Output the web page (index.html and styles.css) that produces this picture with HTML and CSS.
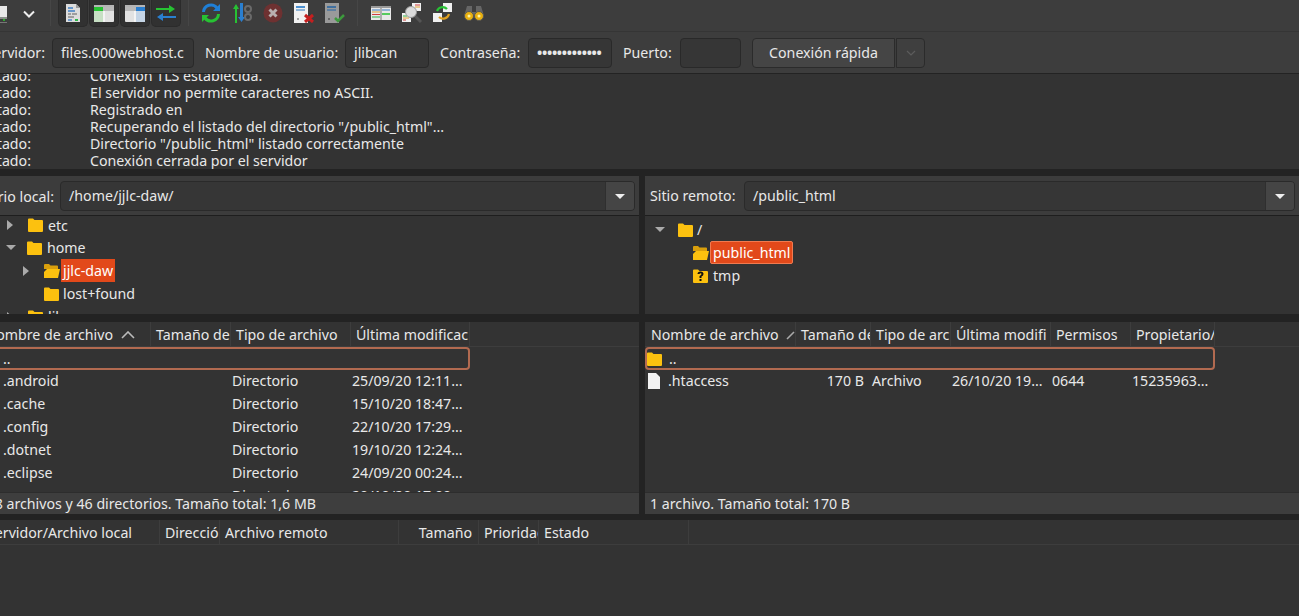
FILE: index.html
```html
<!DOCTYPE html>
<html lang="es">
<head>
  <meta charset="UTF-8">
  <title>FileZilla</title>
  <link rel="stylesheet" href="styles.css">
</head>
<body>
  <div class="toolbar">
    <div class="tool-lead">
      <svg width="8" height="20" viewBox="0 0 8 20"><rect x="0" y="2" width="7" height="11" fill="#e8e8e8"/><rect x="0" y="13" width="7" height="2" fill="#8a8f8a"/><rect x="3" y="15" width="2" height="2" fill="#2fa82f"/><rect x="0" y="18" width="7" height="1" fill="#777"/></svg>
      <svg class="chevron" width="12" height="8" viewBox="0 0 12 8"><path d="M1 1.500l5 5 5-5" fill="none" stroke="#eee" stroke-width="2"/></svg>
    </div>
    <div class="tool-sep"></div>
    <div class="tool-pressed-group">
      <button class="tool pressed"><svg width="16" height="20" viewBox="0 0 16 20"><path d="M1 1h10l4 4v14H1z" fill="#dcdcdc"/><path d="M11 1l4 4h-4z" fill="#9a9a9a"/><path d="M3 5h5M3 8h7" stroke="#3f7fc4" stroke-width="1.400"/><path d="M3 11h3M7 11h5M3 14h6" stroke="#888" stroke-width="1.400"/><path d="M10 17h3" stroke="#2fb84a" stroke-width="2"/><path d="M3 17h4" stroke="#3f7fc4" stroke-width="1.400"/></svg></button>
      <button class="tool pressed"><svg width="20" height="17" viewBox="0 0 20 17"><rect y="0" width="20" height="17" rx="1" fill="#e2e2e2"/><rect width="20" height="2" fill="#b5b5b5"/><rect y="2" width="9" height="4" fill="#27c233"/><rect x="9" y="2" width="11" height="4" fill="#b9b9b9"/><rect y="6" width="9" height="11" fill="#c7e0c4"/><rect x="9" y="6" width="2" height="11" fill="#f4f4f4"/></svg></button>
      <button class="tool pressed"><svg width="20" height="17" viewBox="0 0 20 17"><rect y="0" width="20" height="17" rx="1" fill="#e2e2e2"/><rect width="20" height="2" fill="#b5b5b5"/><rect x="11" y="2" width="9" height="4" fill="#2a7fd0"/><rect y="2" width="11" height="4" fill="#b9b9b9"/><rect x="11" y="6" width="9" height="11" fill="#c5d5e6"/><rect x="9" y="6" width="2" height="11" fill="#f4f4f4"/></svg></button>
      <button class="tool pressed"><svg width="20" height="18" viewBox="0 0 20 18"><path d="M0 4h13V1l6 4-6 4V6H0z" fill="#27c233"/><path d="M20 12H7V9l-6 4 6 4v-3h13z" fill="#2a7fd0"/></svg></button>
    </div>
    <div class="tool-sep tool-sep-mid"></div>
    <div class="tool-group">
      <button class="tool"><svg width="20" height="20" viewBox="0 0 20 20"><path d="M2.500 9A7.500 7.500 0 0 1 16 5" fill="none" stroke="#1f7fd6" stroke-width="3"/><path d="M19 1v7h-7z" fill="#1f7fd6"/><path d="M17.500 11A7.500 7.500 0 0 1 4 15" fill="none" stroke="#27c233" stroke-width="3"/><path d="M1 19v-7h7z" fill="#27c233"/></svg></button>
      <button class="tool"><svg width="20" height="20" viewBox="0 0 20 20"><path d="M3 20V6H1l3-5 3 5H5v14z" fill="#27c233"/><path d="M8 0v14H6l3.500 5 3.500-5h-2V0z" fill="#2a7fd0"/><circle cx="16" cy="6" r="3" fill="none" stroke="#6a6a6a" stroke-width="2"/><circle cx="16" cy="14" r="3" fill="none" stroke="#6a6a6a" stroke-width="2"/></svg></button>
      <button class="tool"><svg width="20" height="20" viewBox="0 0 20 20"><circle cx="10" cy="10" r="9.500" fill="#6e3131"/><path d="M6.500 6.500l7 7M13.500 6.500l-7 7" stroke="#b9b0b0" stroke-width="3"/></svg></button>
      <button class="tool"><svg width="20" height="20" viewBox="0 0 20 20"><rect x="0" y="0" width="14" height="20" fill="#f1f1f1"/><rect x="2" y="3" width="9" height="2" fill="#4a8fd0"/><rect x="2" y="6" width="9" height="2" fill="#8fb5d8"/><circle cx="4" cy="16" r="1" fill="#888"/><path d="M11 12l8 7M19 12l-8 7" stroke="#c41f1f" stroke-width="3"/></svg></button>
      <button class="tool"><svg width="20" height="20" viewBox="0 0 20 20"><rect x="0" y="0" width="14" height="20" fill="#9a9a9a"/><rect x="2" y="3" width="9" height="2" fill="#3f6f9f"/><rect x="2" y="6" width="9" height="2" fill="#5f7f9f"/><circle cx="4" cy="16" r="1" fill="#555"/><path d="M10 15l3 3 6-6" fill="none" stroke="#3d9a3d" stroke-width="2.500"/></svg></button>
    </div>
    <div class="tool-sep tool-sep-end"></div>
    <div class="tool-group">
      <button class="tool"><svg width="20" height="14" viewBox="0 0 20 14"><rect width="20" height="14" fill="#e8e8e8"/><rect width="20" height="2" fill="#9a9a9a"/><path d="M1 4h8" stroke="#3f7fc4"/><path d="M1 6h8" stroke="#e0a030"/><path d="M1 8.500h8" stroke="#d04040"/><path d="M1 11h8" stroke="#30b040"/><path d="M11 4h8" stroke="#3f7fc4"/><path d="M11 8h8" stroke="#27c233" stroke-width="1.500"/><path d="M10 2v12" stroke="#777"/></svg></button>
      <button class="tool"><svg width="22" height="22" viewBox="0 0 22 22"><rect x="11" y="1" width="9" height="8" fill="#f1f1f1"/><path d="M14 3h5" stroke="#d04040"/><path d="M14 5h5" stroke="#e0a030"/><rect x="1" y="11" width="9" height="9" fill="#f1f1f1"/><path d="M2 14h4" stroke="#30b040"/><path d="M2 16h6" stroke="#e0a030"/><path d="M2 18h3" stroke="#d04040"/><path d="M14 14l6 6" stroke="#555" stroke-width="3"/><circle cx="10" cy="10" r="5.500" fill="#dcdcdc" stroke="#999"/></svg></button>
      <button class="tool"><svg width="20" height="20" viewBox="0 0 20 20"><rect x="10" y="0" width="9" height="9" fill="#f1f1f1"/><rect x="0" y="10" width="9" height="9" fill="#f1f1f1"/><path d="M4 8a6 6 0 0 1 10-2" fill="none" stroke="#27c233" stroke-width="2.200"/><path d="M16 11a6 6 0 0 1-10 3" fill="none" stroke="#e0a020" stroke-width="2.200"/></svg></button>
      <button class="tool"><svg width="20" height="16" viewBox="0 0 20 16"><path d="M3 1h5v6h4V1h5l3 10H0z" fill="#666"/><circle cx="5" cy="11" r="4.500" fill="#e8b010" stroke="#555"/><circle cx="15" cy="11" r="4.500" fill="#e8b010" stroke="#555"/><circle cx="5" cy="11" r="1.500" fill="#fff2a0"/><circle cx="15" cy="11" r="1.500" fill="#fff2a0"/></svg></button>
    </div>
  </div>

  <div class="quickbar">
    <span class="cut-left cut-server">Servidor:</span>
    <span class="field field-host">files.000webhost.c</span>
    <span class="qlabel qlabel-user">Nombre de usuario:</span>
    <span class="field field-user">jlibcan</span>
    <span class="qlabel qlabel-pass">Contraseña:</span>
    <span class="field field-pass">•••••••••••••</span>
    <span class="qlabel qlabel-port">Puerto:</span>
    <span class="field field-port"></span>
    <button class="quick-btn">Conexión rápida</button>
    <button class="quick-drop"><svg width="10" height="6" viewBox="0 0 10 6"><path d="M1 1l4 4 4-4" fill="none" stroke="#5c5c5c" stroke-width="1.200"/></svg></button>
  </div>

  <div class="log">
    <div class="log-row"><span class="cut-left log-label">Estado:</span><span>Conexión TLS establecida.</span></div>
    <div class="log-row"><span class="cut-left log-label">Estado:</span><span>El servidor no permite caracteres no ASCII.</span></div>
    <div class="log-row"><span class="cut-left log-label">Estado:</span><span>Registrado en</span></div>
    <div class="log-row"><span class="cut-left log-label">Estado:</span><span>Recuperando el listado del directorio "/public_html"...</span></div>
    <div class="log-row"><span class="cut-left log-label">Estado:</span><span>Directorio "/public_html" listado correctamente</span></div>
    <div class="log-row"><span class="cut-left log-label">Estado:</span><span>Conexión cerrada por el servidor</span></div>
  </div>

  <div class="panes">
    <div class="pane">
      <div class="pathbar">
        <span class="cut-left cut-local">Directorio local:</span>
        <div class="combo combo-local"><span class="combo-text">/home/jjlc-daw/</span><span class="combo-arrow"></span></div>
      </div>
      <div class="tree tree-local">
        <div class="tree-row indent-0"><span class="arrow-right"></span><svg class="folder"><use href="#folder"/></svg><span class="tree-name">etc</span></div>
        <div class="tree-row indent-0"><span class="arrow-down"></span><svg class="folder"><use href="#folder"/></svg><span class="tree-name">home</span></div>
        <div class="tree-row indent-1"><span class="arrow-right"></span><svg class="folder-open"><use href="#folder-open"/></svg><span class="tree-name selected">jjlc-daw</span></div>
        <div class="tree-row indent-1"><span class="arrow-none"></span><svg class="folder"><use href="#folder"/></svg><span class="tree-name tree-name-lost">lost+found</span></div>
        <div class="tree-row indent-0"><span class="arrow-right"></span><svg class="folder"><use href="#folder"/></svg><span class="tree-name">lib</span></div>
      </div>
      <div class="hsplit"></div>
      <div class="list list-local">
        <div class="list-head">
          <span class="cut-left col-name-head">Nombre de archivo<svg class="sort" width="14" height="8" viewBox="0 0 14 8"><path d="M1 7l6-6 6 6" fill="none" stroke="#bbb" stroke-width="1.600"/></svg></span>
          <span class="head-cell col-size">Tamaño de</span>
          <span class="head-cell col-type">Tipo de archivo</span>
          <span class="head-cell col-date">Última modificac</span>
        </div>
        <div class="list-row focus"><span class="dots">..</span></div>
        <div class="list-row"><span class="row-name">.android</span><span class="row-type">Directorio</span><span class="row-date">25/09/20 12:11...</span></div>
        <div class="list-row"><span class="row-name">.cache</span><span class="row-type">Directorio</span><span class="row-date">15/10/20 18:47...</span></div>
        <div class="list-row"><span class="row-name">.config</span><span class="row-type">Directorio</span><span class="row-date">22/10/20 17:29...</span></div>
        <div class="list-row"><span class="row-name">.dotnet</span><span class="row-type">Directorio</span><span class="row-date">19/10/20 12:24...</span></div>
        <div class="list-row"><span class="row-name">.eclipse</span><span class="row-type">Directorio</span><span class="row-date">24/09/20 00:24...</span></div>
        <div class="list-row"><span class="row-name"></span><span class="row-type">Directorio</span><span class="row-date">20/10/20 17:00...</span></div>
      </div>
      <div class="status"><span class="cut-left cut-status">8 archivos y 46 directorios. Tamaño total: 1,6 MB</span></div>
    </div>

    <div class="vsplit"></div>

    <div class="pane">
      <div class="pathbar pathbar-remote">
        <span class="path-label">Sitio remoto:</span>
        <div class="combo combo-remote"><span class="combo-text">/public_html</span><span class="combo-arrow"></span></div>
      </div>
      <div class="tree tree-remote">
        <div class="tree-row remote-0"><span class="arrow-down"></span><svg class="folder"><use href="#folder"/></svg><span class="tree-name">/</span></div>
        <div class="tree-row remote-1"><svg class="folder-open"><use href="#folder-open"/></svg><span class="tree-name selected selected-focus">public_html</span></div>
        <div class="tree-row remote-1"><svg class="folder"><use href="#folder-unknown"/></svg><span class="tree-name tree-name-tmp">tmp</span></div>
      </div>
      <div class="hsplit"></div>
      <div class="list list-remote">
        <div class="list-head">
          <span class="head-cell rcol-name">Nombre de archivo<svg class="sort-r" width="10" height="10" viewBox="0 0 10 10"><path d="M1 9l7-7" stroke="#aaa" stroke-width="1.600"/></svg></span>
          <span class="head-cell rcol-size">Tamaño de</span>
          <span class="head-cell rcol-type">Tipo de arc</span>
          <span class="head-cell rcol-date">Última modifi</span>
          <span class="head-cell rcol-perm">Permisos</span>
          <span class="head-cell rcol-owner">Propietario/</span>
        </div>
        <div class="list-row focus focus-remote"><svg class="folder"><use href="#folder"/></svg><span class="dots-remote">..</span></div>
        <div class="list-row"><svg class="file" width="14" height="16" viewBox="0 0 14 16"><path d="M1 0h8l4 4v12H1z" fill="#f2f2f2"/></svg><span class="rrow-name">.htaccess</span><span class="rrow-size">170 B</span><span class="rrow-type">Archivo</span><span class="rrow-date">26/10/20 19...</span><span class="rrow-perm">0644</span><span class="rrow-owner">15235963...</span></div>
      </div>
      <div class="status status-remote"><span>1 archivo. Tamaño total: 170 B</span></div>
    </div>
  </div>

  <div class="queue">
    <div class="queue-head">
      <span class="cut-left qcol-server">Servidor/Archivo local</span>
      <span class="head-cell qcol-dir">Dirección</span>
      <span class="head-cell qcol-remote">Archivo remoto</span>
      <span class="head-cell qcol-size">Tamaño</span>
      <span class="head-cell qcol-prio">Prioridad</span>
      <span class="head-cell qcol-state">Estado</span>
    </div>
  </div>

  <svg class="defs" width="0" height="0">
    <symbol id="folder" viewBox="0 0 15 14"><path d="M0 1.500Q0 .5 1 .5h4l1.500 1.500H14q1 0 1 1V13q0 1-1 1H1q-1 0-1-1z" fill="#fcc10f"/></symbol>
    <symbol id="folder-open" viewBox="0 0 16 14"><path d="M0 1Q0 0 1 0h4l1.500 1.500H13q1 0 1 1V5H0z" fill="#d99f0c"/><path d="M3 5h13l-2 9H0v-6z" fill="#fcc10f"/></symbol>
    <symbol id="folder-unknown" viewBox="0 0 15 14"><path d="M0 1.500Q0 .5 1 .5h4l1.500 1.500H14q1 0 1 1V13q0 1-1 1H1q-1 0-1-1z" fill="#fcc10f"/><path d="M4.500 5q0-2.500 3-2.500t3 2.500q0 1.500-2 2.500v1.500h-2V7q2-.8 2-2 0-.8-1-.8t-1 .8zM6.500 10h2v2h-2z" fill="#111"/></symbol>
  </svg>
</body>
</html>
```

FILE: styles.css
```css
* {
  box-sizing: border-box;
}
html, body {
  margin: 0;
  height: 616px;
  overflow: hidden;
}
body {
  background-color: #333;
  color: #e8e8e8;
  font-family: "Noto Sans", sans-serif;
  font-size: 14.2px;
  line-height: 17px;
  white-space: nowrap;
}
button {
  font: inherit;
  color: inherit;
  padding: 0;
}

/* text that runs off the left edge of the window */
.cut-left {
  display: flex;
  justify-content: flex-end;
  align-items: center;
  flex: none;
}

/* toolbar */
.toolbar {
  display: flex;
  height: 32px;
  padding-bottom: 5px;
  background-color: #3d3d3d;
  border-bottom: 1px solid #353535;
}
.tool-lead {
  display: flex;
  align-items: center;
  width: 50px;
  padding-top: 2px;
}
.chevron {
  margin-left: 15px;
  margin-top: -1px;
}
.tool-sep {
  width: 1px;
  height: 26px;
  background-color: #464646;
}
.tool-sep-mid {
  margin: 0 6px 0 7px;
}
.tool-sep-end {
  margin: 0 7px 0 7px;
}
.tool-pressed-group {
  display: flex;
  gap: 1px;
  margin-left: 7px;
}
.tool-group {
  display: flex;
}
.tool {
  display: flex;
  align-items: center;
  justify-content: center;
  width: 31px;
  height: 26px;
  border: none;
  background: none;
}
.pressed {
  width: 30px;
  height: 27px;
  background-color: #313131;
  border: 1px solid #2b2b2b;
  border-top: none;
  border-radius: 0 0 5px 5px;
}

/* quick connect */
.quickbar {
  display: flex;
  align-items: center;
  height: 42px;
  background-color: #3d3d3d;
  border-bottom: 1px solid #232323;
}
.cut-server {
  width: 45px;
  margin-right: 7px;
}
.qlabel {
  flex: none;
  margin-left: 11px;
  margin-right: 7px;
}
.qlabel-user {
  width: 133px;
}
.qlabel-pass {
  width: 81px;
}
.qlabel-port {
  width: 50px;
}
.field {
  display: block;
  height: 30px;
  padding: 0 8px;
  line-height: 28px;
  background-color: #363636;
  border: 1px solid #292929;
  border-radius: 4px;
  overflow: hidden;
  flex: none;
}
.field-host {
  width: 142px;
}
.field-user {
  width: 84px;
}
.field-pass {
  width: 84px;
  font-weight: bold;
  font-size: 14px;
  letter-spacing: -0.3px;
}
.field-port {
  width: 61px;
}
.quick-btn {
  width: 143px;
  height: 30px;
  margin-left: 11px;
  background-color: #454545;
  border: 1px solid #2b2b2b;
  border-radius: 4px 0 0 4px;
}
.quick-drop {
  display: flex;
  align-items: center;
  justify-content: center;
  width: 29px;
  height: 30px;
  margin-left: 1px;
  background-color: #3f3f3f;
  border: 1px solid #2b2b2b;
  border-radius: 0 4px 4px 0;
}

/* message log */
.log {
  display: flex;
  flex-direction: column;
  justify-content: flex-end;
  height: 95px;
  overflow: hidden;
  background-color: #333;
}
.log-row {
  display: flex;
  flex: none;
  height: 17px;
}
.log-label {
  width: 31px;
  margin-right: 59px;
}

/* local and remote panes */
.panes {
  display: flex;
  height: 351px;
  border-top: 7px solid #232323;
  border-bottom: 6px solid #232323;
}
.pane {
  display: flex;
  flex-direction: column;
  flex: none;
  width: 639px;
  min-height: 0;
}
.pane:last-child {
  width: 654px;
  flex: 1;
}
.vsplit {
  flex: none;
  width: 6px;
  background-color: #232323;
}
.pathbar {
  display: flex;
  align-items: flex-start;
  flex: none;
  height: 40px;
  padding-top: 5px;
  background-color: #3c3c3c;
  border-bottom: 1px solid #1e1e1e;
}
.cut-local {
  width: 54px;
  height: 30px;
  margin-right: 6px;
}
.pathbar-remote {
  padding-left: 5px;
}
.path-label {
  flex: none;
  width: 89px;
  margin-right: 5px;
  line-height: 30px;
}
.combo {
  display: flex;
  height: 30px;
  background-color: #363636;
  border: 1px solid #2a2a2a;
  border-radius: 4px;
  overflow: hidden;
}
.combo-local {
  width: 575px;
}
.combo-remote {
  flex: 1;
  margin-right: 4px;
}
.combo-text {
  flex: 1;
  padding-left: 8px;
  line-height: 28px;
}
.combo-arrow {
  position: relative;
  flex: none;
  width: 29px;
  background-color: #454545;
  border-left: 1px solid #2f2f2f;
}
.combo-arrow::after {
  content: "";
  position: absolute;
  left: 9px;
  top: 12px;
  border-left: 5px solid transparent;
  border-right: 5px solid transparent;
  border-top: 5px solid #eee;
}

/* directory trees */
.tree {
  flex: none;
  height: 98px;
  overflow: hidden;
  background-color: #333;
}
.tree-remote {
  padding-top: 2px;
}
.tree-row {
  display: flex;
  align-items: center;
  height: 23px;
}
.tree-local .tree-row:first-child {
  height: 20px;
  padding-bottom: 2px;
}
.indent-0 {
  padding-left: 7px;
}
.indent-1 {
  padding-left: 23px;
}
.remote-0 {
  padding-left: 11px;
}
.remote-1 {
  padding-left: 48px;
}
.arrow-right {
  width: 0;
  height: 0;
  margin-right: 15px;
  border-top: 5px solid transparent;
  border-bottom: 5px solid transparent;
  border-left: 6px solid #aaa;
}
.arrow-down {
  width: 0;
  height: 0;
  margin-right: 11px;
  margin-left: -1px;
  border-left: 5px solid transparent;
  border-right: 5px solid transparent;
  border-top: 5px solid #aaa;
}
.remote-0 .arrow-down {
  margin-right: 13px;
}
.arrow-none {
  width: 21px;
}
.folder {
  flex: none;
  width: 15px;
  height: 14px;
}
.folder-open {
  flex: none;
  width: 16px;
  height: 14px;
  margin-right: 1px;
}
.tree-name {
  padding: 0 3px;
  margin-left: 2px;
  height: 23px;
  line-height: 23px;
}
.folder-open + .tree-name {
  margin-left: 0;
  padding: 0 2px;
}
.tree-name-lost {
  margin-left: 1px;
}
.tree-name-tmp {
  margin-left: 2px;
}
.selected {
  background-color: #e2491a;
  color: #fff;
}
.selected-focus {
  border: 1px solid #f07a50;
  border-radius: 2px;
  line-height: 21px;
}
.remote-0 .tree-name {
  margin-left: 1px;
}

.hsplit {
  flex: none;
  height: 8px;
  background-color: #232323;
}

/* file lists */
.list {
  flex: 1;
  min-height: 0;
  overflow: hidden;
  background-color: #333;
}
.list-head, .queue-head {
  display: flex;
  height: 25px;
  border-bottom: 1px solid #3d3d3d;
  line-height: 26px;
}
.head-cell {
  flex: none;
  padding-left: 5px;
  overflow: hidden;
  border-left: 1px solid #3d3d3d;
}
.col-name-head {
  width: 150px;
  padding-top: 2px;
  padding-right: 15px;
}
.sort {
  flex: none;
  margin-left: 8px;
}
.col-size {
  width: 80px;
}
.col-type {
  width: 120px;
}
.col-date {
  width: 120px;
  border-right: 1px solid #3d3d3d;
}
.list-row {
  display: flex;
  align-items: center;
  height: 23px;
  padding-bottom: 2px;
}
.focus {
  padding-bottom: 0;
  border: 2px solid #b26a50;
  border-left-width: 0;
  border-radius: 0 4px 4px 0;
}
.list-local .list-row {
  width: 470px;
}
.dots {
  margin-left: 3px;
}
.row-name {
  width: 232px;
  padding-left: 3px;
}
.row-type {
  width: 120px;
}
.rcol-name {
  width: 150px;
  padding-left: 6px;
  border-left: none;
}
.sort-r {
  margin-left: 7px;
}
.rcol-size {
  width: 75px;
}
.rcol-type {
  width: 80px;
}
.rcol-date {
  width: 100px;
}
.rcol-perm {
  width: 80px;
}
.rcol-owner {
  width: 85px;
  border-right: 1px solid #3d3d3d;
}
.list-remote .list-row {
  width: 570px;
  padding-left: 2px;
}
.list-remote .focus-remote {
  border-left-width: 2px;
  border-radius: 4px;
  padding-left: 0;
}
.dots-remote {
  margin-left: 7px;
}
.file {
  flex: none;
}
.rrow-name {
  width: 136px;
  margin-left: 7px;
}
.rrow-size {
  width: 60px;
  text-align: right;
}
.rrow-type {
  width: 88px;
  padding-left: 8px;
}
.rrow-date {
  width: 100px;
}
.rrow-perm {
  width: 80px;
}

.status {
  display: flex;
  align-items: center;
  flex: none;
  height: 22px;
  background-color: #3e3e3e;
  border-top: 1px solid #2d2d2d;
}
.cut-status {
  width: 316px;
}
.status-remote {
  padding-left: 5px;
}

/* transfer queue */
.queue {
  height: 96px;
  background-color: #333;
}
.qcol-server {
  width: 159px;
  padding-top: 1px;
  padding-right: 27px;
}
.qcol-dir {
  width: 60px;
}
.qcol-remote {
  width: 179px;
}
.qcol-size {
  width: 80px;
  padding-right: 6px;
  text-align: right;
}
.qcol-prio {
  width: 60px;
}
.qcol-state {
  width: 151px;
  border-right: 1px solid #3d3d3d;
}
.defs {
  position: absolute;
}
```
